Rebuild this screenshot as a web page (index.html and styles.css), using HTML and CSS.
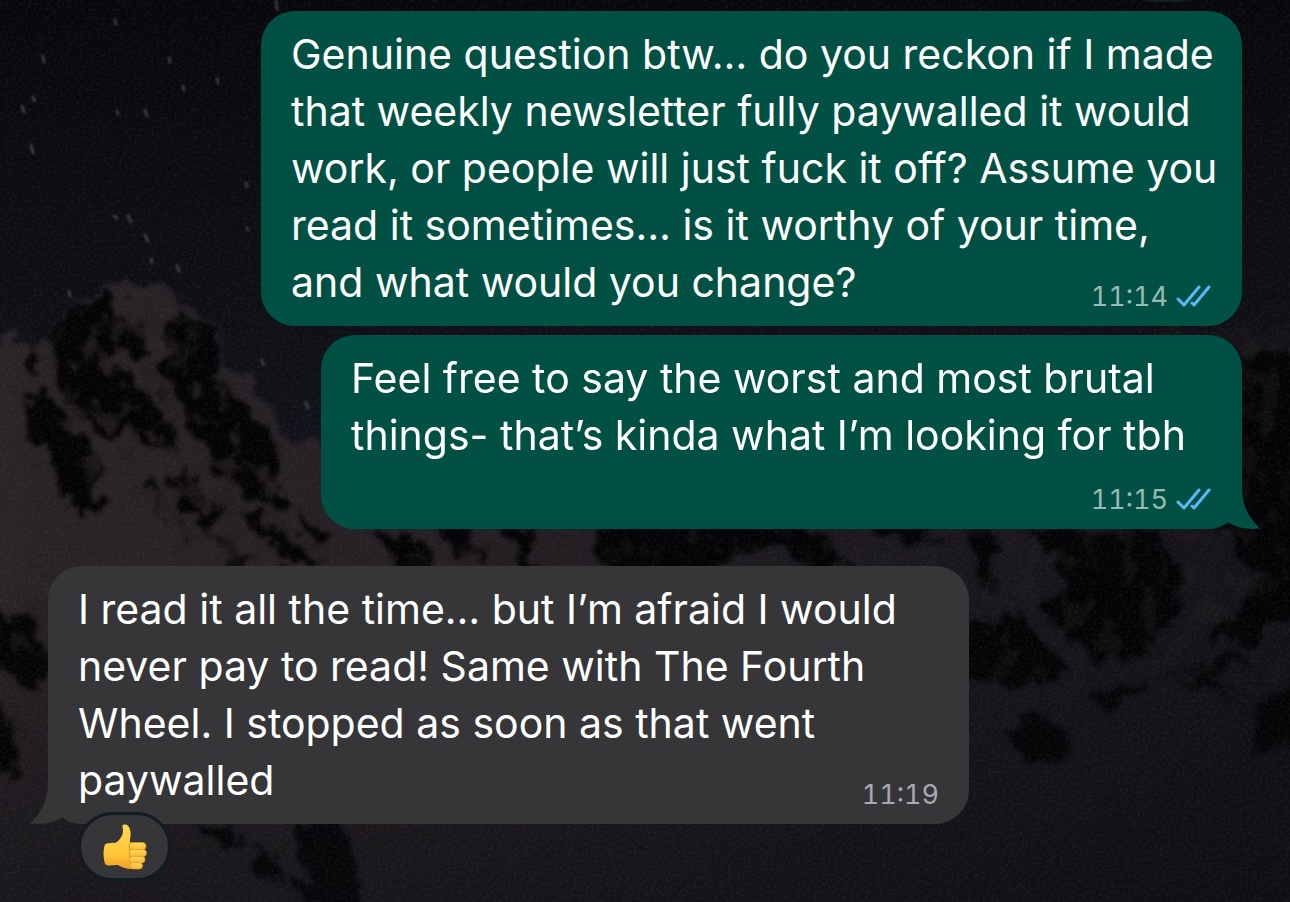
FILE: index.html
```html
<!DOCTYPE html>
<html lang="en">
<head>
  <meta charset="UTF-8" />
  <meta name="viewport" content="width=device-width, initial-scale=1.0" />
  <title>Chat</title>
  <link rel="stylesheet" href="styles.css">
</head>
<body>
  <!-- Wallpaper: night sky over snowy peaks -->
  <svg class="wallpaper" viewBox="0 0 1290 902" preserveAspectRatio="xMidYMid slice" aria-hidden="true">
    <defs>
      <linearGradient id="sky" x1="0" y1="0" x2="0" y2="1">
        <stop offset="0" stop-color="#08070b" />
        <stop offset="0.5" stop-color="#12131a" />
      </linearGradient>
      <linearGradient id="snow" x1="0" y1="0" x2="1" y2="0">
        <stop offset="0" stop-color="#292428" />
        <stop offset="0.3" stop-color="#262125" />
        <stop offset="0.75" stop-color="#19171c" />
        <stop offset="1" stop-color="#141217" />
      </linearGradient>
      <linearGradient id="fade" x1="0" y1="0" x2="0" y2="1">
        <stop offset="0.65" stop-color="#0b0a0f" stop-opacity="0" />
        <stop offset="1" stop-color="#0b0a0f" stop-opacity="0.5" />
      </linearGradient>
      <filter id="rough" filterUnits="userSpaceOnUse" x="-40" y="-40" width="1370" height="982" color-interpolation-filters="sRGB">
        <feTurbulence type="fractalNoise" baseFrequency="0.05" numOctaves="4" seed="4" result="n" />
        <feDisplacementMap in="SourceGraphic" in2="n" scale="36" xChannelSelector="R" yChannelSelector="G" />
        <feGaussianBlur stdDeviation="2" />
      </filter>
      <filter id="patches" filterUnits="userSpaceOnUse" x="0" y="0" width="1290" height="902" color-interpolation-filters="sRGB">
        <feTurbulence type="fractalNoise" baseFrequency="0.05 0.035" numOctaves="4" seed="11" />
        <feColorMatrix values="0 0 0 0 0.14  0 0 0 0 0.12  0 0 0 0 0.13  5 0 0 0 -2.5" result="p" />
        <feGaussianBlur in="SourceGraphic" stdDeviation="12" result="soft" />
        <feComposite in="p" in2="soft" operator="in" />
        <feGaussianBlur stdDeviation="1" />
      </filter>
      <filter id="grain" filterUnits="userSpaceOnUse" x="0" y="0" width="1290" height="902" color-interpolation-filters="sRGB">
        <feTurbulence type="fractalNoise" baseFrequency="0.35" numOctaves="3" seed="2" />
        <feColorMatrix values="0 0 0 0 0.5  0 0 0 0 0.5  0 0 0 0 0.52  0.6 0 0 0 -0.26" />
      </filter>
    </defs>

    <rect width="1290" height="902" fill="url(#sky)" />

    <path filter="url(#rough)" fill="url(#snow)" d="M-40 342L45 342L55 325L78 302L105 290L130 284L168 288L188 308L212 326L228 358L252 384L268 412L284 440L320 446L380 480L700 500L900 420L1060 350L1180 330L1330 325V960H-40Z" />

    <g filter="url(#rough)" fill="#040305">
      <g transform="translate(0 260) scale(0.3333)">
        <path d="M145 215L240 130L330 100L375 175L435 205L445 300L400 300L340 230L320 290L400 390L480 420L540 560L470 560L380 520L330 525L230 470L160 350Z" />
        <path d="M530 170L620 190L670 290L640 350L715 410L760 470L820 540L830 610L810 660L860 720L820 750L720 690L620 600L560 460L510 400L485 290Z" />
        <path d="M70 430L140 390L200 480L260 530L295 610L300 740L240 770L170 700L130 580L80 500Z" />
        <path d="M510 650L590 665L655 740L640 800L560 760ZM440 670L475 685L495 780L465 740ZM640 800L710 890L650 870ZM720 750L850 800L950 890L870 910L780 830ZM890 730L970 830L960 860L905 800ZM70 250L110 300L130 350L90 340ZM530 770L570 830L550 830Z" />
        <path d="M640 840L690 850L770 910L700 930ZM830 840L900 850L970 920L900 900ZM1130 820L1260 850L1290 930L1200 930Z" />
      </g>
      <g transform="translate(0 540) scale(0.3333)">
        <path d="M-40 230L90 220L140 400L100 460L-40 360ZM-30 480L40 560L60 700L20 730L-30 640Z" />
      </g>
      <g transform="translate(860 520) scale(0.3333)">
        <path d="M500 20L880 20L990 180L930 300L860 400L700 430L610 340L520 260L640 200Z" />
        <path d="M300 310L480 290L620 430L560 500L300 490ZM430 610L560 585L650 690L580 735L470 690ZM690 540L830 480L850 510L720 565ZM940 490L1100 390L1160 410L1060 480L1110 560L1040 500ZM1160 650L1210 540L1330 450V640L1190 700ZM1030 0H1340V260L1180 370L1040 340L1130 290L1190 190L1120 90ZM340 40L400 60L410 200L360 190Z" />
      </g>
      <path d="M432 520L455 560L480 560L470 520ZM500 520L520 575L540 580L525 520ZM590 520L600 575L700 575L760 545L830 575L850 560L800 520ZM850 500L930 520L940 545L880 535ZM1230 350L1330 355V540H1230ZM295 820L345 820L355 860L362 930L325 930L300 880ZM195 825L240 830L240 850L205 835ZM250 845L275 855L290 880L260 880Z" />
    </g>

    <!-- snow caught between the rocks -->
    <g filter="url(#patches)">
      <path d="M55 340L125 290L190 320L290 470L400 570L220 560L100 490L40 430Z" opacity="0.8" />
      <path d="M0 600H60V780H0Z" opacity="0.6" />
      <path d="M860 520H1290V680L1000 700L960 600ZM1230 320H1290V530H1230ZM400 529H900V566H400Z" opacity="0.4" />
    </g>

    <g class="stars">
      <path d="M276 1l1 8M22 106l2 6M31 145l2 8M33 97l1 4M43 56l1 6M115 20l1 4M145 110l2 6M183 86l1 4M217 79l1 4M145 235l3 6M128 216l3 6M114 216l3 2M177 266l2 5M151 259l1 4M69 291l1 5M246 183l1 4M262 360l1 5M306 403l2 5M169 58l1 4M117 111l1 3M247 228l1 2" />
    </g>

    <rect width="1290" height="902" fill="url(#fade)" />
    <rect width="1290" height="902" filter="url(#grain)" opacity="0.45" />
  </svg>

  <main class="chat">
    <div class="previous"><span class="previous-reaction"></span></div>

    <article class="bubble sent wide">
      <p class="text">
        Genuine question btw… do you reckon if I made that weekly newsletter fully paywalled it would work, or people will just fuck it off? Assume you read it sometimes… is it worthy of your time, and what would you change?
        <span class="meta">
          <time>11:14</time>
          <svg class="ticks" viewBox="0 0 37 24" role="img" aria-label="Read">
            <path d="M3 14L9 20L24 2M17 18L19 20L34 2" />
          </svg>
        </span>
      </p>
    </article>

    <article class="bubble sent stacked">
      <p class="text">
        Feel free to say the worst and most brutal things- that’s kinda what I’m looking for tbh
        <span class="meta">
          <time>11:15</time>
          <svg class="ticks" viewBox="0 0 37 24" role="img" aria-label="Read">
            <path d="M3 14L9 20L24 2M17 18L19 20L34 2" />
          </svg>
        </span>
      </p>
      <svg class="tail" viewBox="0 0 60 50" aria-hidden="true">
        <path d="M42 0V8C42 28 50 40 60 49.500C48 51 37 49 27.500 43L20 20L30 0Z" />
      </svg>
    </article>

    <article class="bubble received">
      <p class="text">
        I read it all the time… but I’m afraid I would never pay to read! Same with The Fourth Wheel. I stopped as soon as that went paywalled
        <span class="meta">
          <time>11:19</time>
        </span>
      </p>
      <svg class="tail" viewBox="0 0 60 50" aria-hidden="true">
        <path d="M42 0V8C42 28 50 40 60 49.500C48 51 37 49 27.500 43L20 20L30 0Z" />
      </svg>
      <button class="reaction" type="button" aria-label="Thumbs up">
        <svg class="thumb" viewBox="0 0 44 46" aria-hidden="true">
          <defs>
            <linearGradient id="skin" x1="0" y1="0" x2="0" y2="1">
              <stop offset="0" stop-color="#ffd754" />
              <stop offset="0.65" stop-color="#ffc83a" />
              <stop offset="1" stop-color="#f0a024" />
            </linearGradient>
            <linearGradient id="finger" x1="0" y1="0" x2="0" y2="1">
              <stop offset="0" stop-color="#ffdc60" />
              <stop offset="1" stop-color="#fbb62c" />
            </linearGradient>
          </defs>
          <path fill="url(#skin)" d="M2 20.500C5 18 11 20 14 18C17 15.500 20 11.500 20 7C20 3 18.500 1.500 20.500 .8C24 -.6 27 3 27.500 8C28 13 26.500 16 27 18.500L36 20V43L28 45C23 45 20 43.500 16 41.500C11 40 7 43 2.500 40.500C0 36 0 25 2 20.500Z" />
          <path fill="#e39a22" d="M26 19C24.500 24 27 26 25.500 30C27 34 26 37 28 41L33 44V19Z" opacity="0.7" />
          <g fill="url(#finger)" stroke="#de9420" stroke-width="0.7">
            <rect x="26" y="18.500" width="17" height="7.500" rx="3.700" />
            <rect x="26" y="25.600" width="17.500" height="7" rx="3.500" />
            <rect x="26.500" y="32.300" width="15.500" height="6.600" rx="3.300" />
            <rect x="27" y="38.600" width="12.500" height="6.400" rx="3.200" />
          </g>
        </svg>
      </button>
    </article>
  </main>
</body>
</html>
```

FILE: styles.css
```css
:root {
  --sent: #005144;
  --received: #363638;
  --text: #ffffff;
  --time: #99b9b4;
  --tick: #5bb8f8;
}

* {
  box-sizing: border-box;
}

body {
  margin: 0;
  min-height: 100vh;
  font-family: Inter, 'Liberation Sans', sans-serif;
  background: #0c0b10;
  color: var(--text);
  overflow: hidden;
}

.wallpaper {
  position: fixed;
  inset: 0;
  width: 100%;
  height: 100%;
  z-index: -1;
}

.stars {
  fill: none;
  stroke: #5a5a62;
  stroke-width: 3;
  stroke-linecap: round;
  opacity: 0.6;
  filter: blur(1px);
}

.chat {
  display: flex;
  flex-direction: column;
  padding: 0 48px;
}

.previous {
  position: relative;
  height: 11px;
}

.previous-reaction {
  position: absolute;
  right: 30px;
  bottom: 9px;
  width: 92px;
  height: 69px;
  border-radius: 35px;
  background: #122023;
}

.bubble {
  position: relative;
  width: 78%;
  max-width: 921px;
  padding: 15px 20px 15px 30px;
  border-radius: 34px;
}

.sent {
  align-self: flex-end;
  background: var(--sent);
  margin-bottom: 9px;
}

.wide {
  width: 83%;
  max-width: 981px;
}

.received {
  align-self: flex-start;
  margin-top: 28px;
  background: var(--received);
}

.text {
  display: flow-root;
  margin: 0;
  font-size: 41px;
  line-height: 57px;
}

/* sits at the end of the last line, or drops below when that line is full */
.meta {
  float: right;
  display: flex;
  align-items: center;
  gap: 7px;
  margin: 29px 10px 0 0;
  font-size: 27px;
  line-height: 28px;
  color: var(--time);
  font-variant-numeric: tabular-nums;
}

.stacked .meta {
  margin-top: 22px;
}

.received .meta {
  color: #a9a7b0;
}

.ticks {
  width: 37px;
  height: 24px;
  fill: none;
  stroke: var(--tick);
  stroke-width: 3;
  stroke-linecap: round;
  stroke-linejoin: round;
}

.tail {
  position: absolute;
  right: -18px;
  bottom: 0;
  width: 60px;
  height: 50px;
  fill: var(--sent);
}

.received .tail {
  right: auto;
  left: -18px;
  fill: var(--received);
  transform: scaleX(-1);
}

.reaction {
  position: absolute;
  left: 30px;
  bottom: -57px;
  display: flex;
  align-items: center;
  justify-content: center;
  width: 93px;
  height: 69px;
  padding: 0;
  border: 3px solid #101c20;
  border-radius: 35px;
  background: var(--received);
  cursor: pointer;
}

.thumb {
  width: 44px;
  height: 46px;
}
```
